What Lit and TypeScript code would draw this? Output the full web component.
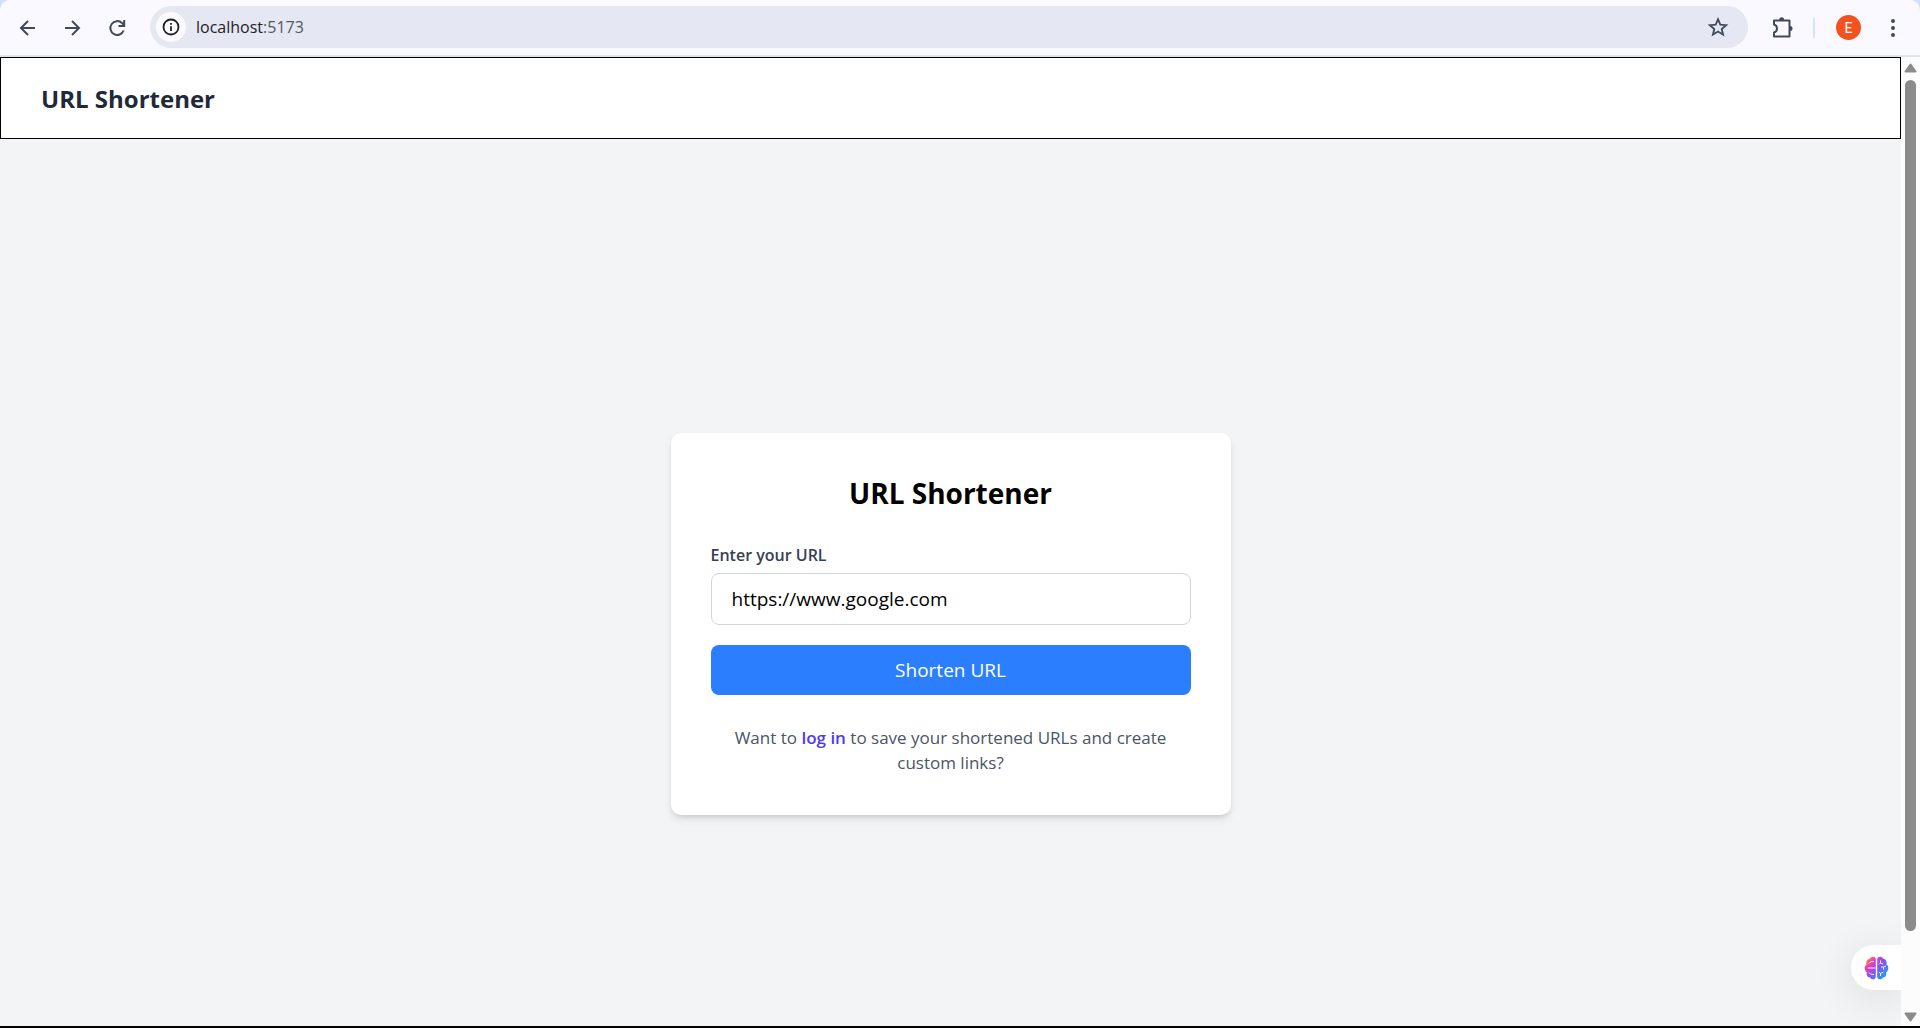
import { LitElement, html, css, svg } from "lit";
import { customElement, state } from "lit/decorators.js";

const icon = (size: number, body: unknown) => html`<svg
  width=${size} height=${size} viewBox="0 0 ${size} ${size}" aria-hidden="true">${body}</svg>`;

@customElement("browser-toolbar")
class BrowserToolbar extends LitElement {
  static styles = css`
    :host { display: block; background: #d3e1fb; }
    .bar {
      display: flex; align-items: center; height: 55px; padding: 0 15px;
      background: #faf9ff; border-bottom: 2px solid #dfe3ee;
      border-radius: 10px 10px 0 0; color: #414a5c;
    }
    button {
      display: flex; align-items: center; justify-content: center; flex: none;
      border: 0; padding: 0; margin: 0; background: none; color: inherit; font: inherit;
    }
    svg { display: block; }
    .nav { display: flex; gap: 21px; margin-right: 21px; }
    .address {
      flex: 1; display: flex; align-items: center; height: 42px; margin-bottom: 1px;
      padding: 0 18px 0 6px; border-radius: 21px; background: #e5e8f3; min-width: 0;
    }
    .info { width: 30px; height: 30px; border-radius: 50%; background: #fbfaff; color: #1f2024; margin-right: 10px; }
    .url { flex: 1; font-size: 16px; line-height: 24px; color: #55565e; }
    .host { color: #1f2024; }
    .actions { display: flex; align-items: center; margin-left: 22px; }
    .divider { width: 2px; height: 20px; border-radius: 1px; background: #d3e3fd; margin: 0 21px 0 19px; }
    .avatar { width: 25px; height: 25px; border-radius: 50%; background: #f4511e; color: #fff; font-size: 14px; margin-right: 20px; font-family: Roboto, "Liberation Sans", sans-serif; }
  `;
  render() {
    return html`<div class="bar">
      <div class="nav">
        <button aria-label="Back">${icon(24, svg`<path d="M20 12H6.500M13 5l-7 7 7 7" fill="none" stroke="currentColor" stroke-width="2"/>`)}</button>
        <button aria-label="Forward">${icon(24, svg`<path d="M5 12H18.500M12 5l7 7-7 7" fill="none" stroke="currentColor" stroke-width="2"/>`)}</button>
        <button aria-label="Reload">${icon(24, svg`<path d="M18.700 14.500A6.900 6.900 0 1 1 17 7L19 9M19.200 4V10H13.500" fill="none" stroke="currentColor" stroke-width="2"/>`)}</button>
      </div>
      <div class="address">
        <button class="info" aria-label="Site information">${icon(18, svg`<circle cx="9" cy="9" r="7.500" fill="none" stroke="currentColor" stroke-width="1.800"/><path d="M9 8.200V13M9 5V6.800" stroke="currentColor" stroke-width="1.800"/>`)}</button>
        <span class="url"><span class="host">localhost</span>:5173</span>
        <button aria-label="Bookmark">${icon(24, svg`<path d="M12 4.200l2.300 5.400 5.900.500-4.500 3.900 1.400 5.700-5.100-3.100-5.100 3.100 1.400-5.700-4.500-3.900 5.900-.500z" fill="none" stroke="currentColor" stroke-width="1.800"/>`)}</button>
      </div>
      <div class="actions">
        <button aria-label="Extensions">${icon(24, svg`<path d="M4 4.500H19.500V20.500H4V16.500C8 15.500 8 9.500 4 8.500Z" fill="none" stroke="currentColor" stroke-width="2" stroke-linejoin="round"/><path d="M9.200 4a2.500 2.700 0 0 1 5 0zM20 10a2.500 2.500 0 0 1 0 5z" fill="currentColor"/>`)}</button>
        <span class="divider"></span>
        <button class="avatar" aria-label="Profile">E</button>
        <button aria-label="Menu">${icon(24, svg`<g fill="currentColor"><circle cx="12" cy="5" r="2"/><circle cx="12" cy="12" r="2"/><circle cx="12" cy="19" r="2"/></g>`)}</button>
      </div>
    </div>`;
  }
}

@customElement("page-scrollbar")
class PageScrollbar extends LitElement {
  static styles = css`
    :host { display: flex; flex-direction: column; align-items: center; width: 19px; padding: 6px 0 4px; box-sizing: border-box; background: #fcfcfc; }
    svg { display: block; flex: none; }
    .track { flex: 1; width: 11px; margin: 7px 0; }
    .thumb { height: 92%; border-radius: 6px; background: #8b8b8b; }
  `;
  render() {
    return html`
      <svg width="13" height="10" viewBox="0 0 13 10" aria-hidden="true"><path d="M6.500 1.500L11.500 8.500H1.500Z" fill="#8b8b8b" stroke="#8b8b8b" stroke-width="2" stroke-linejoin="round"/></svg>
      <div class="track"><div class="thumb"></div></div>
      <svg width="13" height="10" viewBox="0 0 13 10" aria-hidden="true"><path d="M6.500 8.500L11.500 1.500H1.500Z" fill="#8b8b8b" stroke="#8b8b8b" stroke-width="2" stroke-linejoin="round"/></svg>`;
  }
}

@customElement("shorten-card")
class ShortenCard extends LitElement {
  @state() url = "https://www.google.com";
  static styles = css`
    :host { display: block; width: 100%; max-width: 560px; }
    .card {
      padding: 40px; border-radius: 10px; background: #fff;
      box-shadow: 0 5px 8px -1px rgba(0, 0, 0, 0.1), 0 3px 5px -2px rgba(0, 0, 0, 0.1);
    }
    h2 { margin: 0 0 30px; font-size: 28px; line-height: 40px; font-weight: 700; text-align: center; color: #000; }
    label { display: block; margin-bottom: 5px; font-size: 16px; line-height: 25px; font-weight: 600; color: #364153; }
    input {
      display: block; box-sizing: border-box; width: 100%; height: 52px; margin: 0 0 20px; padding: 0 20px;
      border: 1px solid #d1d5dc; border-radius: 8px; background: #fff; color: #000; font: inherit; font-size: 19px; outline: none;
    }
    .submit {
      display: block; width: 100%; height: 50px; padding: 0; border: 0; border-radius: 8px;
      background: #2b7fff; color: #fff; font: inherit; font-size: 19px;
    }
    p { margin: 30px 0 0; padding: 0 20px; font-size: 17px; line-height: 25px; text-align: center; color: #4a5565; }
    a { color: #4f39f6; font-weight: 600; text-decoration: none; }
  `;
  render() {
    return html`<form class="card" @submit=${(e: Event) => e.preventDefault()}>
      <h2>URL Shortener</h2>
      <label for="url">Enter your URL</label>
      <input id="url" type="text" .value=${this.url}
        @input=${(e: Event) => { this.url = (e.target as HTMLInputElement).value; }} />
      <button class="submit" type="submit">Shorten URL</button>
      <p>Want to <a href="#login">log in</a> to save your shortened URLs and create custom links?</p>
    </form>`;
  }
}

@customElement("app-root")
class AppRoot extends LitElement {
  static styles = css`
    :host {
      display: flex; flex-direction: column; height: 100vh; box-sizing: border-box;
      border-bottom: 2px solid #000; overflow: hidden;
      font-family: "Segoe UI", "Open Sans", "Noto Sans", sans-serif;
    }
    .viewport { flex: 1; min-height: 0; display: flex; }
    .page { position: relative; flex: 1; min-width: 0; overflow: hidden; background: #f3f4f6; }
    .header { display: flex; align-items: center; box-sizing: border-box; height: 82px; padding: 0 40px; border: 1px solid #000; background: #fff; }
    h1 { margin: 0; font-size: 24px; line-height: 35px; font-weight: 700; color: #1e2939; }
    main { display: flex; align-items: center; justify-content: center; height: 100%; }
    .assistant {
      position: absolute; right: 0; bottom: 36px; display: flex; align-items: center; width: 50px; height: 45px;
      padding: 0 0 0 13px; border: 0; border-radius: 23px 0 0 23px; background: #fff;
      box-shadow: 0 8px 40px rgba(0, 0, 0, 0.1);
    }
  `;
  render() {
    return html`
      <browser-toolbar></browser-toolbar>
      <div class="viewport">
        <div class="page">
          <header class="header"><h1>URL Shortener</h1></header>
          <main><shorten-card></shorten-card></main>
          <button class="assistant" aria-label="Assistant">
            <svg width="25" height="24" viewBox="0 0 25 24" aria-hidden="true">
              <defs><linearGradient id="g" gradientUnits="userSpaceOnUse" x1="3" y1="2" x2="22" y2="19">
                <stop offset="0" stop-color="#ff9a1f"/><stop offset=".25" stop-color="#ee3cb8"/><stop offset=".55" stop-color="#8a50f5"/><stop offset="1" stop-color="#1e9bff"/>
              </linearGradient></defs>
              <path fill="url(#g)" d="M11.800 3V21C11.500 24 7 24 6 21.500C3 21.500 2 18 3 16.500C0 14.500 0 10 2.500 8.500C1.500 5.500 3.500 3 6 2.500C7 0 11.500 0 11.800 3ZM13.200 3V21C13.500 24 18 24 19 21.500C22 21.500 23 18 22 16.500C25 14.500 25 10 22.500 8.500C23.500 5.500 21.500 3 19 2.500C18 0 13.500 0 13.200 3Z"/>
              <path fill="none" stroke="#fff" stroke-width=".9" d="M5 7.500Q6 5 10 5.500M4 12H11.500M5 16.500Q6 19 10 18.500M16.500 4.500V7L15 8.500M16.500 7L19 8M17 11H19.500L22 10M19.500 11V13.500M16.500 20V17.500L15 16M16.500 17.500L19.500 16"/>
            </svg>
          </button>
        </div>
        <page-scrollbar></page-scrollbar>
      </div>`;
  }
}
